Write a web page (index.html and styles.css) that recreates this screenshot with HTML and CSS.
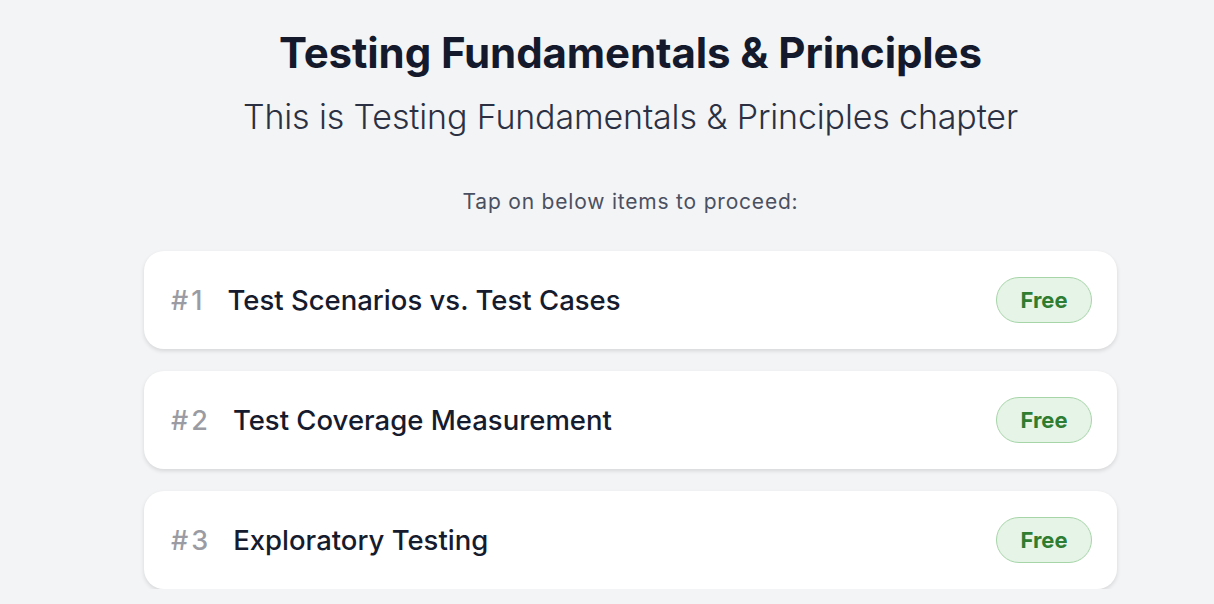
FILE: index.html
```html
<!DOCTYPE html>
<html lang="en">
<head>
<meta charset="utf-8">
<title>Testing Fundamentals &amp; Principles</title>
<link rel="stylesheet" href="styles.css">
</head>
<body>
<main class="page">
  <header class="head">
    <h1 class="title">Testing Fundamentals &amp; Principles</h1>
    <p class="subtitle">This is Testing Fundamentals &amp; Principles chapter</p>
  </header>
  <p class="hint">Tap on below items to proceed:</p>
  <ul class="list">
    <li class="card">
      <span class="num">#1</span>
      <span class="name">Test Scenarios vs. Test Cases</span>
      <span class="badge">Free</span>
    </li>
    <li class="card">
      <span class="num">#2</span>
      <span class="name">Test Coverage Measurement</span>
      <span class="badge">Free</span>
    </li>
    <li class="card">
      <span class="num">#3</span>
      <span class="name">Exploratory Testing</span>
      <span class="badge">Free</span>
    </li>
  </ul>
</main>
</body>
</html>
```
FILE: styles.css
```css
* { box-sizing: border-box; }
html, body { margin: 0; padding: 0; }
body {
  background: #f3f4f6;
  font-family: "Inter", "Noto Sans", sans-serif;
  color: #161b2e;
  overflow: hidden;
}
.page {
  width: 973px;
  margin-left: 144px;
  padding-top: 28px;
}
.head { text-align: center; }
.title {
  margin: 0;
  font-size: 42px;
  line-height: 50px;
  font-weight: 700;
  color: #141a2c;
  letter-spacing: -0.1px;
}
.subtitle {
  margin: 19px 0 0;
  font-size: 34px;
  line-height: 40px;
  font-weight: 300;
  color: #2b3143;
  letter-spacing: -0.15px;
}
.hint {
  margin: 53px 0 0;
  text-align: center;
  font-size: 21px;
  line-height: 24px;
  color: #4b5060;
  letter-spacing: 0.8px;
}
.list {
  list-style: none;
  margin: 37px 0 0;
  padding: 0;
  display: flex;
  flex-direction: column;
  gap: 22px;
}
.card {
  height: 98px;
  background: #fff;
  border-radius: 20px;
  box-shadow: 0 2px 4px rgba(0,0,0,0.12);
  display: flex;
  align-items: center;
  padding: 0 25px 0 27px;
}
.num {
  font-size: 27px;
  font-weight: 500;
  color: #9b9ca3;
  letter-spacing: 3px;
  margin-right: 22px;
}
.name {
  flex: 1;
  font-size: 27.5px;
  font-weight: 500;
  color: #161b2e;
}
.badge {
  width: 96px;
  height: 46px;
  border-radius: 23px;
  background: #e6f4e7;
  border: 1.5px solid #a6d5a8;
  color: #2e7d32;
  font-weight: 700;
  font-size: 22px;
  display: flex;
  align-items: center;
  justify-content: center;
}
```
